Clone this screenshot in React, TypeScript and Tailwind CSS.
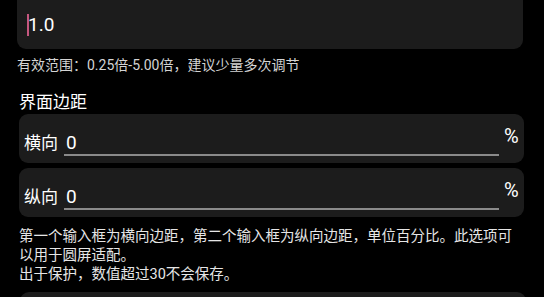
import React from "react";

const rows = [
  { label: "横向", value: "0" },
  { label: "纵向", value: "0" },
];

function MarginRow({ label, value }: { label: string; value: string }) {
  return (
    <div className="flex items-start h-[49px] w-[505px] bg-[#1c1c1c] rounded-[9px] pl-[5px] pr-[4px]">
      <span className="mt-[18px] text-[17px] leading-[22px] text-white">{label}</span>
      <div className="ml-[6px] mt-[18px] flex-1 h-[24px] border-b-2 border-[#8a8a8a] pl-[2px] text-[19px] leading-[22px] text-white">
        {value}
      </div>
      <span className="ml-[5px] mt-[11px] w-[16px] text-[20px] leading-[22px] text-white">%</span>
    </div>
  );
}

export default function App() {
  return (
    <div className="w-[544px] h-[297px] overflow-hidden bg-black text-white font-['Roboto','Noto_Sans_CJK_SC',sans-serif]">
      {/* scale input */}
      <div className="ml-[17px] flex items-center h-[49px] w-[506px] bg-[#1c1c1c] rounded-b-[9px] pl-[10px]">
        <span className="w-[2px] h-[22px] bg-[#c5577f]" />
        <span className="-ml-[1px] text-[19px] leading-[22px] text-white">1.0</span>
      </div>
      <p className="ml-[17px] mt-[7px] text-[14px] leading-[18px] text-[#d4d4d4]">
        有效范围：0.25倍-5.00倍，建议少量多次调节
      </p>

      <h2 className="ml-[19px] mt-[17px] text-[17px] leading-[22px] text-white">界面边距</h2>

      <div className="ml-[19px] mt-[1px] flex flex-col gap-[5px]">
        {rows.map((r) => (
          <MarginRow key={r.label} label={r.label} value={r.value} />
        ))}
      </div>

      <p className="ml-[19px] mt-[10px] w-[500px] text-[14.5px] leading-[19px] text-[#e6e6e6]">
        第一个输入框为横向边距，第二个输入框为纵向边距，单位百分比。此选项可以用于圆屏适配。
        <br />
        出于保护，数值超过30不会保存。
      </p>

      <div className="ml-[20px] mt-[8px] h-[40px] w-[506px] bg-[#1c1c1c] rounded-t-[9px]" />
    </div>
  );
}
